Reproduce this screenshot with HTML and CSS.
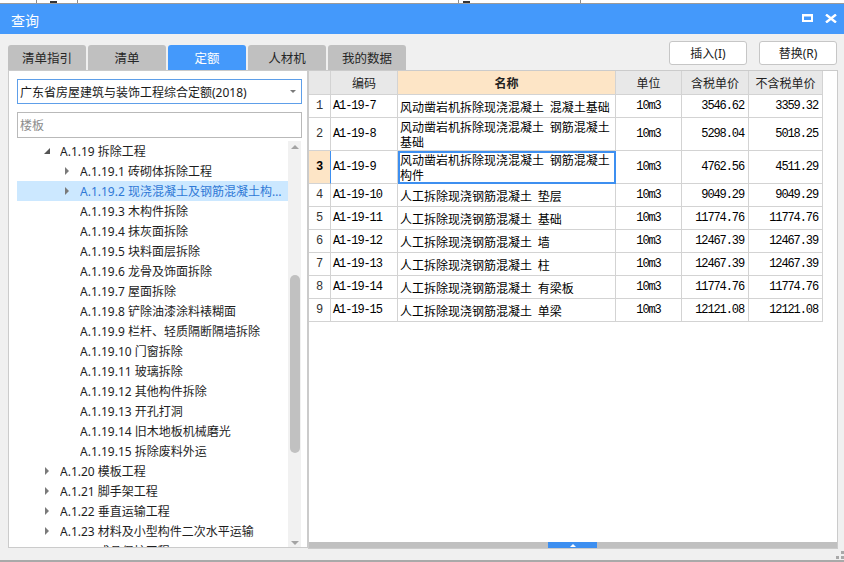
FILE: index.html
```html
<!DOCTYPE html>
<html lang="zh-CN">
<head>
<meta charset="utf-8">
<title>查询</title>
<link rel="stylesheet" href="styles.css">
</head>
<body>
<div class="app">
  <div class="strip">
    <span class="vl v1"></span><span class="tick t1"></span><span class="vl v2"></span><span class="vl v3"></span><span class="tick t2"></span><span class="vl v4"></span>
  </div>
  <div class="titlebar">
    <span class="title">查询</span>
    <div class="win-btns">
      <svg class="ic-max" width="11" height="8" viewBox="0 0 11 8"><rect x="1" y="1.5" width="9" height="5.5" fill="none" stroke="#fff" stroke-width="2"/><rect x="0" y="0" width="11" height="2" fill="#fff"/></svg>
      <svg class="ic-close" width="12" height="9" viewBox="0 0 12 9"><path d="M1 0.5 L11 8.5 M11 0.5 L1 8.5" stroke="#fff" stroke-width="2.4" fill="none"/></svg>
    </div>
  </div>
  <div class="toolbar">
    <div class="tabs">
      <div class="tab">清单指引</div>
      <div class="tab">清单</div>
      <div class="tab active">定额</div>
      <div class="tab">人材机</div>
      <div class="tab">我的数据</div>
    </div>
    <div class="actions">
      <button class="btn">插入(I)</button>
      <button class="btn">替换(R)</button>
    </div>
  </div>
  <div class="main">
    <div class="left">
      <div class="select"><span>广东省房屋建筑与装饰工程综合定额(2018)</span><i class="caret"></i></div>
      <div class="search">楼板</div>
      <div class="tree-wrap">
        <div class="tree">
          <div class="tree-row l1"><i class="tg open"></i><span class="tx">A.1.19 拆除工程</span></div>
          <div class="tree-row l2"><i class="tg closed"></i><span class="tx">A.1.19.1 砖砌体拆除工程</span></div>
          <div class="tree-row l2 selected"><i class="tg closed"></i><span class="tx">A.1.19.2 现浇混凝土及钢筋混凝土构件拆除</span></div>
          <div class="tree-row l2"><i class="tg"></i><span class="tx">A.1.19.3 木构件拆除</span></div>
          <div class="tree-row l2"><i class="tg"></i><span class="tx">A.1.19.4 抹灰面拆除</span></div>
          <div class="tree-row l2"><i class="tg"></i><span class="tx">A.1.19.5 块料面层拆除</span></div>
          <div class="tree-row l2"><i class="tg"></i><span class="tx">A.1.19.6 龙骨及饰面拆除</span></div>
          <div class="tree-row l2"><i class="tg"></i><span class="tx">A.1.19.7 屋面拆除</span></div>
          <div class="tree-row l2"><i class="tg"></i><span class="tx">A.1.19.8 铲除油漆涂料裱糊面</span></div>
          <div class="tree-row l2"><i class="tg"></i><span class="tx">A.1.19.9 栏杆、轻质隔断隔墙拆除</span></div>
          <div class="tree-row l2"><i class="tg"></i><span class="tx">A.1.19.10 门窗拆除</span></div>
          <div class="tree-row l2"><i class="tg"></i><span class="tx">A.1.19.11 玻璃拆除</span></div>
          <div class="tree-row l2"><i class="tg"></i><span class="tx">A.1.19.12 其他构件拆除</span></div>
          <div class="tree-row l2"><i class="tg"></i><span class="tx">A.1.19.13 开孔打洞</span></div>
          <div class="tree-row l2"><i class="tg"></i><span class="tx">A.1.19.14 旧木地板机械磨光</span></div>
          <div class="tree-row l2"><i class="tg"></i><span class="tx">A.1.19.15 拆除废料外运</span></div>
          <div class="tree-row l1"><i class="tg closed"></i><span class="tx">A.1.20 模板工程</span></div>
          <div class="tree-row l1"><i class="tg closed"></i><span class="tx">A.1.21 脚手架工程</span></div>
          <div class="tree-row l1"><i class="tg closed"></i><span class="tx">A.1.22 垂直运输工程</span></div>
          <div class="tree-row l1"><i class="tg closed"></i><span class="tx">A.1.23 材料及小型构件二次水平运输</span></div>
          <div class="tree-row l1"><i class="tg closed"></i><span class="tx">A.1.24 成品保护工程</span></div>
        </div>
        <div class="vscroll">
          <i class="arr-up"></i>
          <div class="vthumb"></div>
          <i class="arr-down"></i>
        </div>
      </div>
    </div>
    <div class="right">
      <div class="grid">
        <div class="row head">
          <div class="c h"></div>
          <div class="c h">编码</div>
          <div class="c h hl">名称</div>
          <div class="c h">单位</div>
          <div class="c h">含税单价</div>
          <div class="c h">不含税单价</div>
        </div>
        <div class="row">
          <div class="c num">1</div><div class="c code">A1-19-7</div><div class="c name"><span>风动凿岩机拆除现浇混凝土 混凝土基础</span></div><div class="c unit">10m3</div><div class="c price">3546.62</div><div class="c price">3359.32</div>
        </div>
        <div class="row tall">
          <div class="c num">2</div><div class="c code">A1-19-8</div><div class="c name"><span>风动凿岩机拆除现浇混凝土 钢筋混凝土基础</span></div><div class="c unit">10m3</div><div class="c price">5298.04</div><div class="c price">5018.25</div>
        </div>
        <div class="row tall">
          <div class="c num sel">3</div><div class="c code">A1-19-9</div><div class="c name sel"><span>风动凿岩机拆除现浇混凝土 钢筋混凝土构件</span></div><div class="c unit">10m3</div><div class="c price">4762.56</div><div class="c price">4511.29</div>
        </div>
        <div class="row">
          <div class="c num">4</div><div class="c code">A1-19-10</div><div class="c name"><span>人工拆除现浇钢筋混凝土 垫层</span></div><div class="c unit">10m3</div><div class="c price">9049.29</div><div class="c price">9049.29</div>
        </div>
        <div class="row">
          <div class="c num">5</div><div class="c code">A1-19-11</div><div class="c name"><span>人工拆除现浇钢筋混凝土 基础</span></div><div class="c unit">10m3</div><div class="c price">11774.76</div><div class="c price">11774.76</div>
        </div>
        <div class="row">
          <div class="c num">6</div><div class="c code">A1-19-12</div><div class="c name"><span>人工拆除现浇钢筋混凝土 墙</span></div><div class="c unit">10m3</div><div class="c price">12467.39</div><div class="c price">12467.39</div>
        </div>
        <div class="row">
          <div class="c num">7</div><div class="c code">A1-19-13</div><div class="c name"><span>人工拆除现浇钢筋混凝土 柱</span></div><div class="c unit">10m3</div><div class="c price">12467.39</div><div class="c price">12467.39</div>
        </div>
        <div class="row">
          <div class="c num">8</div><div class="c code">A1-19-14</div><div class="c name"><span>人工拆除现浇钢筋混凝土 有梁板</span></div><div class="c unit">10m3</div><div class="c price">11774.76</div><div class="c price">11774.76</div>
        </div>
        <div class="row">
          <div class="c num">9</div><div class="c code">A1-19-15</div><div class="c name"><span>人工拆除现浇钢筋混凝土 单梁</span></div><div class="c unit">10m3</div><div class="c price">12121.08</div><div class="c price">12121.08</div>
        </div>
      </div>
      <div class="hscroll"><div class="hthumb"><i class="arr-up small"></i></div></div>
    </div>
  </div>
  <div class="footer">
    <svg class="grip" width="8" height="8" viewBox="0 0 8 8"><rect x="5" y="0" width="3" height="3" fill="#a9a9a9"/><rect x="0" y="5" width="3" height="3" fill="#a9a9a9"/><rect x="5" y="5" width="3" height="3" fill="#a9a9a9"/></svg>
  </div>
</div>
</body>
</html>
```

FILE: styles.css
```css
* { box-sizing: border-box; }
html, body { margin: 0; padding: 0; }
body {
  width: 844px;
  height: 562px;
  overflow: hidden;
  background: #f0f0f0;
  font-family: "Noto Sans", "Noto Sans CJK SC", sans-serif;
  font-size: 12px;
  color: #1e1e1e;
}
i { display: block; font-style: normal; }
.app { width: 844px; height: 562px; display: flex; flex-direction: column; }

/* top remnant strip */
.strip { height: 4px; background: #fff; border-bottom: 1px solid #9a9a9a; display: flex; align-items: stretch; flex: none; }
.strip .vl { width: 1px; background: #8c8c8c; }
.strip .tick { width: 7px; height: 2px; background: #333; margin-top: 1px; }
.strip .v1 { margin-left: 36px; }
.strip .t1 { margin-left: 13px; }
.strip .v2 { margin-left: 20px; }
.strip .v3 { margin-left: 380px; }
.strip .t2 { margin-left: 4px; }
.strip .v4 { margin-left: 110px; }

/* title bar */
.titlebar { height: 30px; flex: none; background: #4499fb; display: flex; color: #fff; padding-left: 11px; }
.title { font-size: 14px; line-height: 30px; padding-top: 1px; font-family: "Noto Sans CJK SC", sans-serif; }
.win-btns { margin-left: auto; margin-right: 7px; margin-top: 10px; display: flex; align-items: flex-start; gap: 12px; height: 10px; }

/* toolbar */
.toolbar { height: 36px; flex: none; display: flex; padding: 0 7px 0 8px; }
.tabs { display: flex; gap: 2px; align-self: flex-end; }
.tab {
  width: 78px; height: 25px; background: #c0c0c0; border-radius: 3px 3px 0 0;
  display: flex; align-items: center; justify-content: center;
  font-size: 12.5px; color: #262626; font-family: "Noto Sans CJK SC", sans-serif;
}
.tab.active { background: #4499fb; color: #fff; }
.actions { margin-left: auto; display: flex; gap: 12px; padding-top: 7px; }
.btn {
  width: 78px; height: 24px; background: #fff; border: 1px solid #c6c6c6; border-radius: 3px;
  font-family: "Noto Sans", "Noto Sans CJK SC", sans-serif; font-size: 12px; color: #222;
  display: flex; align-items: center; justify-content: center; padding: 0; margin: 0;
}

/* main */
.main { height: 479px; flex: none; display: flex; padding-left: 8px; }
.left {
  width: 300px; height: 478px; background: #fff; border: 1px solid #cbcbcb;
  padding: 8px 0 0 8px; display: flex; flex-direction: column;
}
.select {
  width: 285px; height: 25px; flex: none; border: 1px solid #5e9fe9;
  display: flex; align-items: center; padding: 0 5px 0 2px; color: #1a1a1a; white-space: nowrap;
}
.select .caret { margin-left: auto; width: 0; height: 0; border-left: 3px solid transparent; border-right: 3px solid transparent; border-top: 3px solid #7a7a7a; }
.search {
  width: 285px; height: 26px; flex: none; border: 1px solid #b9b9b9; margin-top: 8px;
  display: flex; align-items: center; padding-left: 2px; color: #8c8c8c;
}
.tree-wrap { margin-top: 3px; width: 284px; flex: 1; display: flex; min-height: 0; }
.tree { width: 271px; overflow: hidden; }
.tree-row { height: 20px; display: flex; align-items: center; white-space: nowrap; color: #1e1e1e; }
.tree-row.l1 { padding-left: 23px; }
.tree-row.l2 { padding-left: 43px; }
.tree-row.selected { background: #cce8ff; color: #2f78d6; }
.tg { width: 20px; height: 20px; flex: none; }
.tg.open::before {
  content: ""; display: block; width: 0; height: 0; margin: 7px 0 0 4px;
  border-left: 6px solid transparent; border-bottom: 6px solid #555;
}
.tg.closed::before {
  content: ""; display: block; width: 0; height: 0; margin: 6px 0 0 5px;
  border-top: 4px solid transparent; border-bottom: 4px solid transparent; border-left: 4px solid #7a7a7a;
}
.tx { overflow: hidden; text-overflow: ellipsis; min-width: 0; line-height: 20px; padding-right: 4px; margin-top: 2px; }

.vscroll { width: 13px; background: #f1f1f1; display: flex; flex-direction: column; align-items: center; }
.arr-up { width: 0; height: 0; margin-top: 4px; border-left: 4px solid transparent; border-right: 4px solid transparent; border-bottom: 4px solid #a3a3a3; }
.vthumb { width: 10px; height: 178px; border-radius: 5px; background: #c1c1c1; margin-top: 126px; }
.arr-down { width: 0; height: 0; margin-top: auto; margin-bottom: 2px; border-left: 4px solid transparent; border-right: 4px solid transparent; border-top: 4px solid #a3a3a3; }

/* grid */
.right {
  width: 530px; height: 479px; background: #fff; border: 1px solid #cbcbcb;
  display: flex; flex-direction: column;
}
.grid { width: 514px; font-family: "Noto Sans CJK SC", sans-serif; font-size: 12px; color: #000; }
.row { display: grid; grid-template-columns: 22px 67px 218px 66px 67px 74px; height: 23px; }
.row.head { height: 24px; }
.row.tall { height: 33px; }
.c { border-right: 1px solid #d3d3d3; border-bottom: 1px solid #d3d3d3; display: flex; align-items: center; overflow: hidden; min-width: 0; }
.h { justify-content: center; background: #e8e8e8; font-family: "Noto Sans", "Noto Sans CJK SC", sans-serif; color: #222; }
.h.hl { background: #fde5c6; font-weight: bold; }
.num, .code, .unit, .price { font-family: "Liberation Mono", monospace; font-size: 12px; letter-spacing: -1.1px; white-space: nowrap; }
.num { justify-content: center; color: #333; letter-spacing: 0; }
.num.sel { background: #fde5c6; font-weight: bold; border-right-color: #3d8ff0; color: #000; }
.code { padding-left: 2px; }
.unit { justify-content: center; }
.price { justify-content: flex-end; padding-right: 4px; }
.name { padding-left: 2px; line-height: 15px; word-spacing: 3px; }
.name span { min-width: 0; }
.name.sel { outline: 2px solid #3d8ff0; outline-offset: -2px; }

.hscroll { margin-top: auto; height: 6px; flex: none; background: #c0c0c0; display: flex; }
.hthumb { margin-left: 239px; width: 49px; background: #3d8ff0; display: flex; align-items: center; justify-content: center; }
.arr-up.small { margin-top: 0; border-left: 3px solid transparent; border-right: 3px solid transparent; border-bottom: 3px solid #fff; }

/* footer */
.footer { height: 13px; flex: none; border-bottom: 2px solid #a9a9a9; display: flex; justify-content: flex-end; align-items: flex-start; padding-top: 2px; }
.grip { display: block; }
```
